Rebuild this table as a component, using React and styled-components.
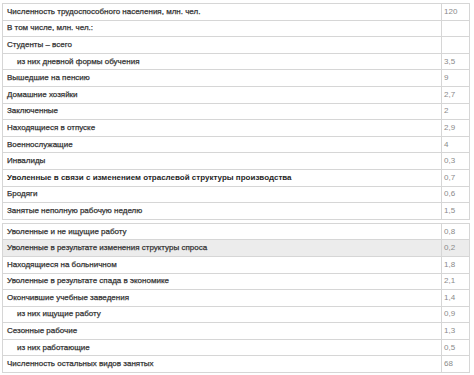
import React from 'react';
import styled, { createGlobalStyle } from 'styled-components';

const GlobalStyle = createGlobalStyle`
  html, body {
    margin: 0;
    padding: 0;
    background: #ffffff;
  }
  body {
    font-family: "Liberation Sans", Arial, sans-serif;
  }
`;

const Page = styled.div`
  width: 474px;
  height: 375px;
  padding: 3px 4px 0 2px;
  box-sizing: border-box;
  display: flex;
  flex-direction: column;
  gap: 3px;
  overflow: hidden;
`;

const Table = styled.table`
  width: 468px;
  border-collapse: collapse;
  table-layout: fixed;
`;

const Row = styled.tr`
  height: 16.6px;
  background: ${props => (props.$highlight ? '#ececec' : '#ffffff')};
`;

const LabelCell = styled.td`
  border: 1px solid #d6d6d6;
  padding: 0 0 0 ${props => (props.$indent ? '14px' : '4px')};
  font-size: 8px;
  font-weight: ${props => (props.$strong ? 700 : 400)};
  color: ${props => (props.$strong ? '#262626' : '#333333')};
  -webkit-text-stroke: ${props => (props.$strong ? '0' : '0.25px #333333')};
  white-space: nowrap;
  overflow: hidden;
  vertical-align: middle;
  line-height: 10px;
`;

const ValueCell = styled.td`
  width: 28px;
  border: 1px solid #d6d6d6;
  padding: 0 0 0 2px;
  font-size: 8px;
  color: #8a8a8a;
  white-space: nowrap;
  vertical-align: middle;
  line-height: 10px;
`;

const firstBlock = [
  { label: 'Численность трудоспособного населения, млн. чел.', value: '120' },
  { label: 'В том числе, млн. чел.:', value: '' },
  { label: 'Студенты – всего', value: '' },
  { label: 'из них дневной формы обучения', value: '3,5', indent: true },
  { label: 'Вышедшие на пенсию', value: '9' },
  { label: 'Домашние хозяйки', value: '2,7' },
  { label: 'Заключенные', value: '2' },
  { label: 'Находящиеся в отпуске', value: '2,9' },
  { label: 'Военнослужащие', value: '4' },
  { label: 'Инвалиды', value: '0,3' },
  { label: 'Уволенные в связи с изменением отраслевой структуры производства', value: '0,7', strong: true },
  { label: 'Бродяги', value: '0,6' },
  { label: 'Занятые неполную рабочую неделю', value: '1,5' },
];

const secondBlock = [
  { label: 'Уволенные и не ищущие работу', value: '0,8' },
  { label: 'Уволенные в результате изменения структуры спроса', value: '0,2', highlight: true },
  { label: 'Находящиеся на больничном', value: '1,8' },
  { label: 'Уволенные в результате спада в экономике', value: '2,1' },
  { label: 'Окончившие учебные заведения', value: '1,4' },
  { label: 'из них ищущие работу', value: '0,9', indent: true },
  { label: 'Сезонные рабочие', value: '1,3' },
  { label: 'из них работающие', value: '0,5', indent: true },
  { label: 'Численность остальных видов занятых', value: '68' },
];

function DataTable({ rows }) {
  return (
    <Table>
      <colgroup>
        <col />
        <col style={{ width: 28 }} />
      </colgroup>
      <tbody>
        {rows.map((r, i) => (
          <Row key={i} $highlight={r.highlight}>
            <LabelCell $indent={r.indent} $strong={r.strong}>{r.label}</LabelCell>
            <ValueCell>{r.value}</ValueCell>
          </Row>
        ))}
      </tbody>
    </Table>
  );
}

export default function App() {
  return (
    <>
      <GlobalStyle />
      <Page>
        <DataTable rows={firstBlock} />
        <DataTable rows={secondBlock} />
      </Page>
    </>
  );
}
